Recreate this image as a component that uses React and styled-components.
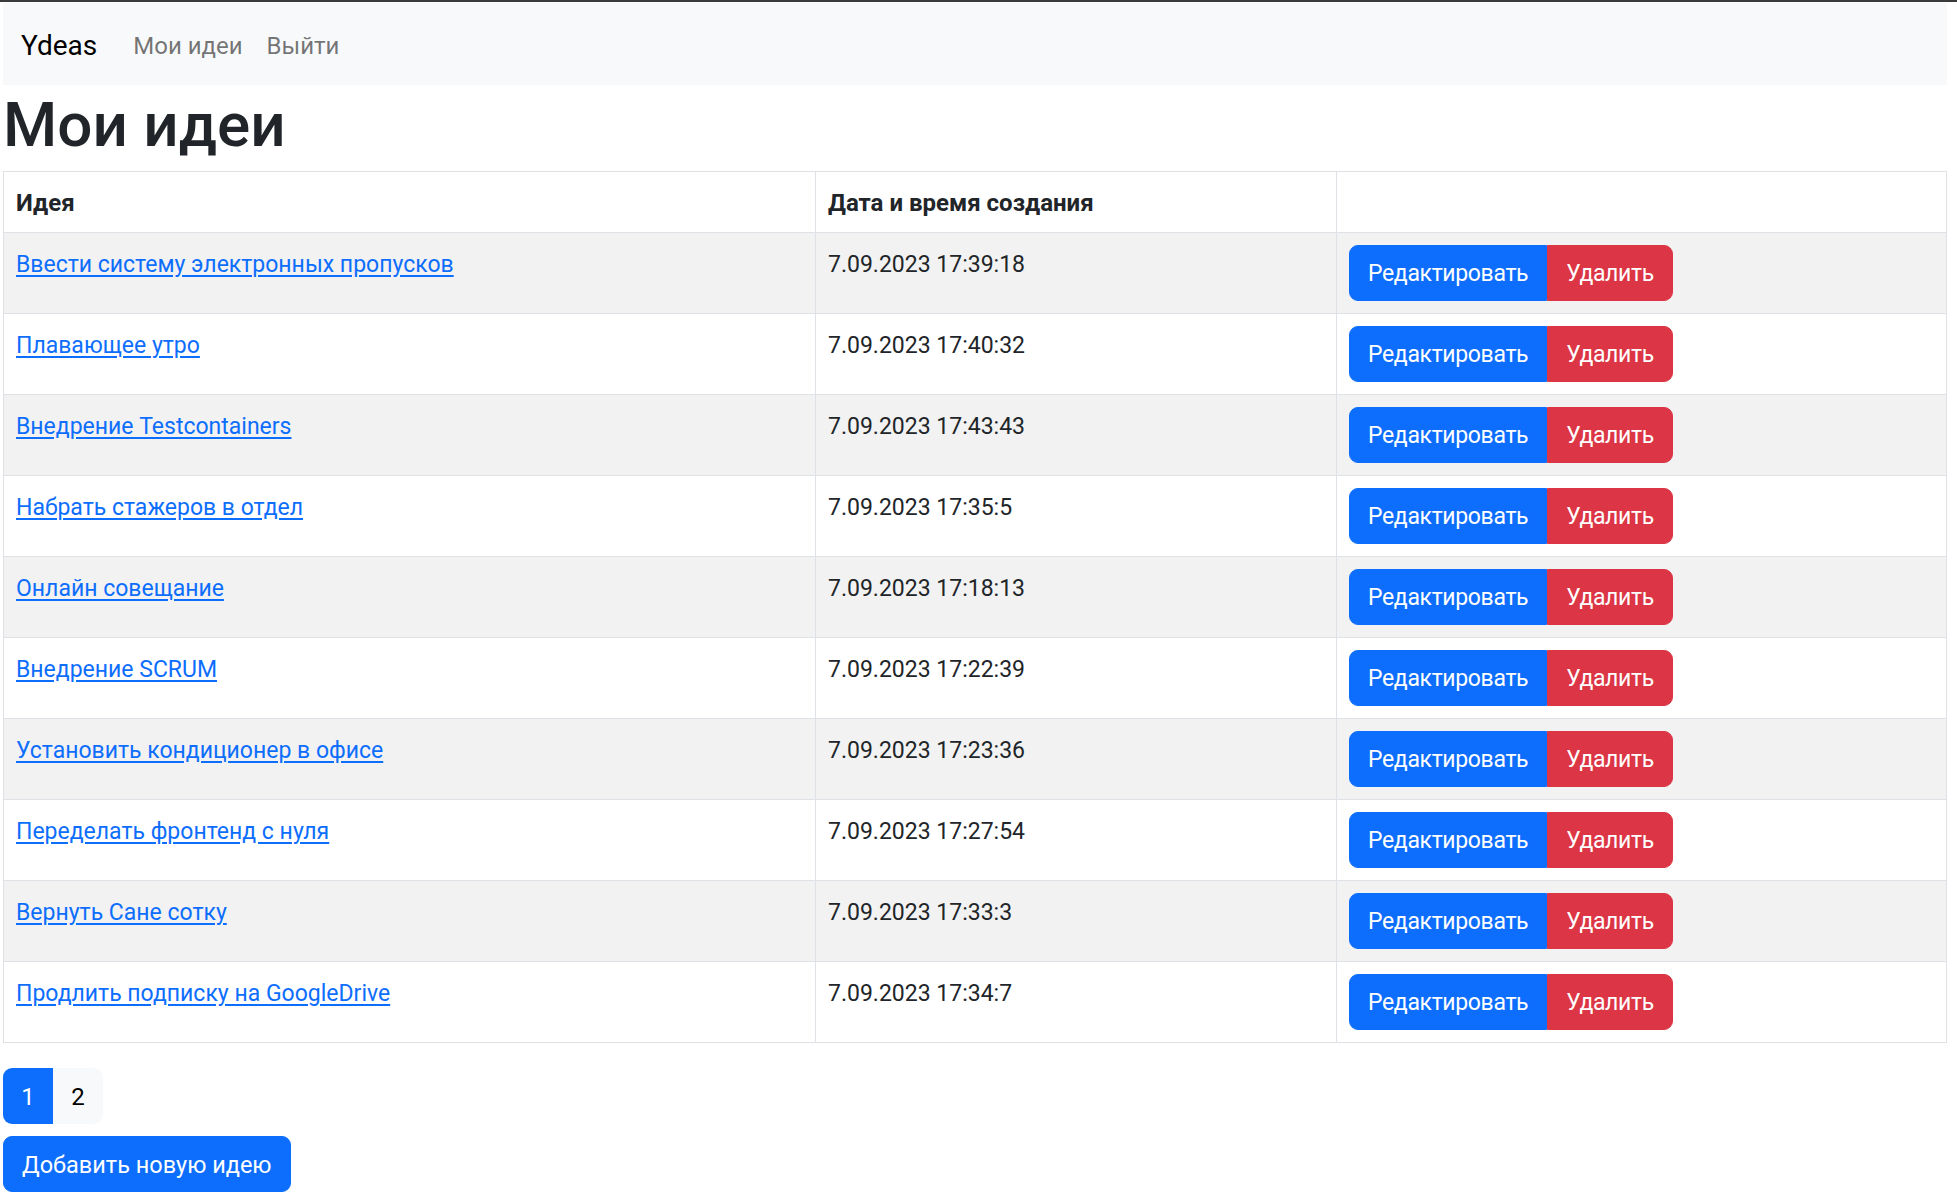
import React from 'react';
import styled, { createGlobalStyle } from 'styled-components';

const IDEAS = [
  { id: 1, title: 'Ввести систему электронных пропусков', created: '7.09.2023 17:39:18' },
  { id: 2, title: 'Плавающее утро', created: '7.09.2023 17:40:32' },
  { id: 3, title: 'Внедрение Testcontainers', created: '7.09.2023 17:43:43' },
  { id: 4, title: 'Набрать стажеров в отдел', created: '7.09.2023 17:35:5' },
  { id: 5, title: 'Онлайн совещание', created: '7.09.2023 17:18:13' },
  { id: 6, title: 'Внедрение SCRUM', created: '7.09.2023 17:22:39' },
  { id: 7, title: 'Установить кондиционер в офисе', created: '7.09.2023 17:23:36' },
  { id: 8, title: 'Переделать фронтенд с нуля', created: '7.09.2023 17:27:54' },
  { id: 9, title: 'Вернуть Сане сотку', created: '7.09.2023 17:33:3' },
  { id: 10, title: 'Продлить подписку на GoogleDrive', created: '7.09.2023 17:34:7' },
];

const GlobalStyle = createGlobalStyle`
  * { box-sizing: border-box; }
  body {
    margin: 0;
    border-top: 2px solid #3a3a3a;
    background: #fff;
    color: #212529;
    font-family: Roboto, "Noto Sans", sans-serif;
    font-size: 23px;
    line-height: 36px;
  }
`;

export default function App() {
  return (
    <>
      <GlobalStyle />
      <Page>
        <Navbar>
          <Brand href="#">Ydeas</Brand>
          <NavLink href="#">Мои идеи</NavLink>
          <NavLink href="#">Выйти</NavLink>
        </Navbar>
        <Title>Мои идеи</Title>
        <Table>
          <thead>
            <tr>
              <Th width={812}>Идея</Th>
              <Th width={521}>Дата и время создания</Th>
              <Th />
            </tr>
          </thead>
          <tbody>
            {IDEAS.map((idea, i) => (
              <Row key={idea.id} striped={i % 2 === 0}>
                <Td>
                  <IdeaLink href="#">{idea.title}</IdeaLink>
                </Td>
                <Td>{idea.created}</Td>
                <Td actions>
                  <ButtonGroup>
                    <Button variant="primary">Редактировать</Button>
                    <Button variant="danger">Удалить</Button>
                  </ButtonGroup>
                </Td>
              </Row>
            ))}
          </tbody>
        </Table>
        <Pagination>
          <PageItem active>1</PageItem>
          <PageItem>2</PageItem>
        </Pagination>
        <AddButton>Добавить новую идею</AddButton>
      </Page>
    </>
  );
}

const Page = styled.div`
  width: 1947px;
  padding-left: 3px;
  padding-top: 1px;
`;

const Navbar = styled.nav`
  display: flex;
  align-items: center;
  height: 82px;
  padding: 4px 18px 0;
  background: #f8f9fa;
`;

const Brand = styled.a`
  font-size: 28px;
  color: #000;
  text-decoration: none;
  margin-right: 36px;
`;

const NavLink = styled.a`
  font-size: 24px;
  color: rgba(0, 0, 0, 0.55);
  text-decoration: none;
  margin-right: 24px;
`;

const Title = styled.h1`
  margin: 4px 0 10px;
  font-size: 62px;
  font-weight: 500;
  line-height: 72px;
`;

const Table = styled.table`
  width: 100%;
  border-collapse: collapse;
  margin-bottom: 25px;
`;

const Th = styled.th`
  width: ${p => (p.width ? `${p.width}px` : 'auto')};
  padding: 13px 12px 11px;
  text-align: left;
  font-size: 24px;
  font-weight: 700;
  border: 1px solid #dee2e6;
  line-height: 36px;
`;

const Row = styled.tr`
  background: ${p => (p.striped ? '#f2f2f2' : '#fff')};
`;

const Td = styled.td`
  padding: ${p => (p.actions ? '12px' : '14px 12px 10px')};
  vertical-align: top;
  border: 1px solid #dee2e6;
  line-height: 36px;
`;

const IdeaLink = styled.a`
  color: #0d6efd;
  text-decoration: underline;
  text-underline-offset: 3px;
`;

const ButtonGroup = styled.div`
  display: inline-flex;
`;

const Button = styled.button`
  font-family: inherit;
  font-size: 23px;
  letter-spacing: -0.35px;
  line-height: 36px;
  padding: 10px 18px 8px;
  border: 1px solid ${p => (p.variant === 'danger' ? '#dc3545' : '#0d6efd')};
  background: ${p => (p.variant === 'danger' ? '#dc3545' : '#0d6efd')};
  color: #fff;
  border-radius: 0;

  &:first-child {
    border-radius: 9px 0 0 9px;
  }
  &:last-child {
    border-radius: 0 9px 9px 0;
  }
`;

const Pagination = styled.div`
  display: flex;
  margin-bottom: 12px;
`;

const PageItem = styled.span`
  display: block;
  width: 50px;
  height: 56px;
  line-height: 58px;
  font-size: 24px;
  text-align: center;
  background: ${p => (p.active ? '#0d6efd' : '#f8f9fa')};
  color: ${p => (p.active ? '#fff' : '#000')};

  &:first-child {
    border-radius: 9px 0 0 9px;
  }
  &:last-child {
    border-radius: 0 9px 9px 0;
  }
`;

const AddButton = styled.button`
  display: block;
  font-family: inherit;
  font-size: 23.5px;
  line-height: 36px;
  padding: 10px 18px 8px;
  border: 1px solid #0d6efd;
  background: #0d6efd;
  color: #fff;
  border-radius: 9px;
`;
